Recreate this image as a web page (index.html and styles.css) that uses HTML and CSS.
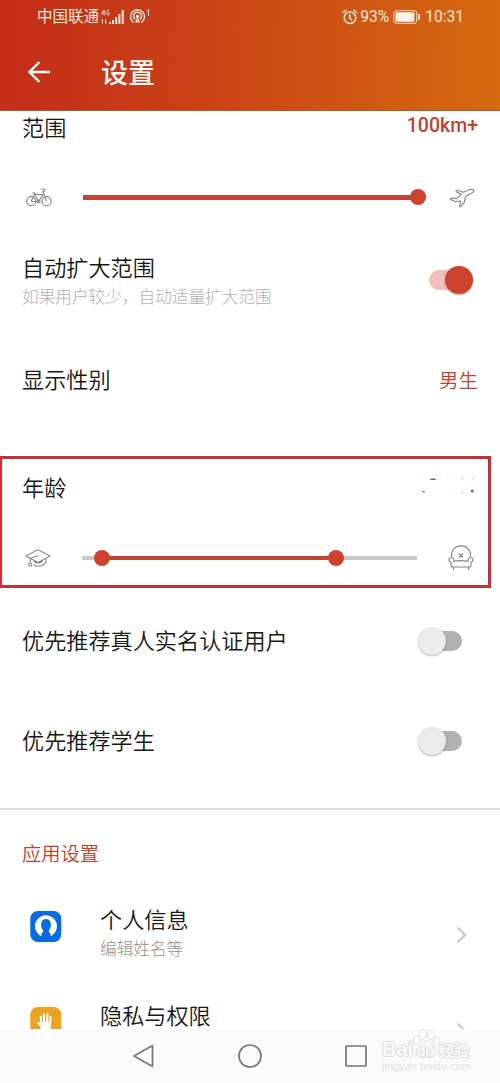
FILE: index.html
```html
<!DOCTYPE html>
<html lang="zh-CN">
<head>
<meta charset="utf-8">
<title>设置</title>
<link rel="stylesheet" href="styles.css">
</head>
<body>
<div class="phone">
  <header class="header">
    <div class="status">
      <span class="carrier">中国联通</span>
      <svg class="signal" width="24" height="18" viewBox="0 0 24 18">
        <g fill="none" stroke="#ffe9dc" stroke-width="1"><path d="M3 2L.6 5.6H4M3.2 2v5.500M8.300 3C7.500 1.800 5.700 2 5.700 4.700C5.700 7.600 8.300 7.600 8.300 5H7M1.500 11.500v4M.5 12.700l1-1.200M4.500 11.500v4M5.500 14.300l-1 1.200"/></g>
        <path fill="#ffe9dc" d="M8 14h2v2H8zM11 12h2v4h-2zM14.200 9h2v7h-2zM17.400 6h2v10h-2zM20.700 2h2v14h-2z"/>
      </svg>
      <svg class="hotspot" width="22" height="18" viewBox="0 0 22 18">
        <g fill="none" stroke="#ffe9dc" stroke-width="1.500" stroke-linecap="round"><path d="M4.200 14.200A7 7 0 1 1 12.800 14.200M5.700 11A4 4 0 1 1 11.300 11"/></g>
        <circle cx="8.500" cy="8.500" r="1.700" fill="#ffe9dc"/><path d="M8.500 9l2.500 5.500H6z" fill="#ffe9dc"/>
        <path d="M17.700 2.800l1.800-1v6" fill="none" stroke="#ffe9dc"/>
      </svg>
      <svg class="alarm" width="16" height="16" viewBox="0 0 16 16" fill="none" stroke="#ffe9dc" stroke-width="1.500" stroke-linecap="round"><circle cx="8" cy="8.700" r="5.800"/><path d="M7.700 5.500v3.500l2 1.700M1.300 3.500L4 1.200M12 1.200l2.700 2.300"/></svg>
      <span class="pct">93%</span>
      <svg class="battery" width="28" height="14" viewBox="0 0 28 14"><rect x=".7" y=".7" width="23" height="12.600" rx="2.500" fill="none" stroke="#ffd9bd" stroke-width="1"/><rect x="2.400" y="2.300" width="19" height="9.400" rx="1" fill="#fff1e8"/><path d="M26 4v6" stroke="#ffe9dc" stroke-width="1.700"/></svg>
      <span class="clock">10:31</span>
    </div>
    <div class="toolbar">
      <svg width="24" height="24" viewBox="0 0 24 24" fill="none" stroke="#fff" stroke-width="2.400"><path d="M23 12H3M12.500 2L2.400 12l10.100 10"/></svg>
      <h1 class="title">设置</h1>
    </div>
  </header>

  <main class="content">
    <div class="row range-head"><span class="label">范围</span><span class="value distance">100km+</span></div>
    <div class="slider range-slider">
      <svg class="edge-icon" width="26" height="26" viewBox="0 0 26 26" fill="none" stroke="#8a8a8a" stroke-width="1.200"><circle cx="5.200" cy="17.200" r="4.500"/><circle cx="20.600" cy="17.200" r="4.500"/><path d="M5.200 17.200L8.500 10.500H17l-4.500 7H5.200M6.200 9h4M8 9l4.500 8.500M15 5h3.500l.5 1.800-2.300.7 3.900 9.700"/><circle cx="12.500" cy="17.500" r="1.500"/></svg>
      <div class="track full"><i class="fill"></i><i class="knob"></i></div>
      <svg class="edge-icon" width="26" height="26" viewBox="0 0 26 26" fill="none" stroke="#8a8a8a" stroke-width="1.200" stroke-linejoin="round"><path d="M14.400 8.300L8.600 6.300 7 7.800l5.300 2.600-4.700 4.200-4.600-.7-1.700 1.200 5.100 2.600 5.300-.7-1.200 6 1.500-.8 3.200-3.700 1.500-6.200 6.500-3.500c2.200-1.200 2.200-2.800.2-3.400-1.800-.4-3 .1-4.600 1.100z"/></svg>
    </div>
    <div class="row auto-row">
      <div class="texts"><span class="label">自动扩大范围</span><span class="hint">如果用户较少，自动适量扩大范围</span></div>
      <span class="switch on"></span>
    </div>
    <div class="row gender-row"><span class="label">显示性别</span><span class="value gender">男生</span></div>

    <section class="age-box">
      <div class="row age-head">
        <span class="label">年龄</span>
        <svg class="age-value" width="56" height="18" viewBox="0 0 56 18"><g fill="#a93a32"><path d="M8 3.600Q11 1.400 14 3.400V4H8zM.5 15h2.200v1.200H.5zM49 14.300l1.500-.8 1 .8v2H49z"/><path d="M39.500 2h1.500v.7h-1.500zM50 2h1v.7h-1zM39.500 16h1.500v.7h-1.500z" opacity=".6"/></g></svg>
      </div>
      <div class="slider age-slider">
        <svg class="edge-icon" width="26" height="26" viewBox="0 0 26 26" fill="none" stroke="#8a8a8a" stroke-width="1.100" stroke-linejoin="round"><path d="M.9 11L13 4.700 25.100 11 13 17.400 5.200 13.300 13 10.700M.9 11l4.300 2.300v5M21 14v2.500c-1.800 4.700-9 6-12.500 3.300M8.700 16.200c2 1.600 5.800 2.500 9.300-.2"/><circle cx="5.200" cy="19.600" r="1.600"/></svg>
        <div class="track span"><i class="fill"></i><i class="knob low"></i><i class="knob high"></i></div>
        <svg class="edge-icon" width="26" height="26" viewBox="0 0 26 26" fill="none" stroke="#868686" stroke-width="1.100"><path d="M3.800 12.500C2.500 5.500 7 .9 13 .9s10.500 4.600 9.200 11.600M5.500 16.500c5-1.200 10-1.200 15 0M6 16.500c0-2.500-1-4-2.700-4C.3 12.500.3 17 3 17.200V20c0 1.300.8 2 2 2h16c1.200 0 2-.7 2-2v-2.800c2.700-.2 2.700-4.700-.3-4.700-1.700 0-2.700 1.500-2.700 4M5.500 22v3M20.500 22v3M11 8.500l4 4M15 8.500l-4 4"/></svg>
      </div>
    </section>

    <div class="row toggle-row"><span class="label">优先推荐真人实名认证用户</span><span class="switch"></span></div>
    <div class="row toggle-row"><span class="label">优先推荐学生</span><span class="switch"></span></div>

    <section class="app-settings">
      <h2 class="section-title">应用设置</h2>
      <div class="item">
        <svg class="app-icon" width="32" height="31" viewBox="0 0 32 31"><rect x=".3" width="31" height="31" rx="7.500" fill="#096be0"/><path fill="#fff" d="M11.500 25.200A11 10.900 0 1 1 20.500 25.200V22.400C18.800 21.500 18.500 20.200 19 19c3-3 2.700-11-3-11s-6 8-3 11c.5 1.200.2 2.500-1.500 3.400z"/></svg>
        <div class="texts"><span class="label">个人信息</span><span class="hint dark">编辑姓名等</span></div>
        <svg class="chevron" width="12" height="18" viewBox="0 0 12 18" fill="none" stroke="#c8c8c8" stroke-width="2.400"><path d="M1.500 1.500L9 9l-7.500 7.500"/></svg>
      </div>
      <div class="item">
        <svg class="app-icon" width="32" height="31" viewBox="0 0 32 31"><rect x=".3" width="31" height="31" rx="7.500" fill="#eda321"/><g fill="none" stroke="#fff" stroke-width="2.100" stroke-linecap="round"><path d="M11.200 16L10.800 9.800M14.100 16L13.800 7.200M17.200 16L17.500 7.200M20 17L20.700 10M8.500 15.800l3.500 4.500"/></g><path fill="#fff" d="M10.200 15h10.800v4c0 3-2 4-2 8h-6c0-3-2.800-4-2.800-8z"/></svg>
        <div class="texts"><span class="label">隐私与权限</span></div>
        <svg class="chevron" width="12" height="18" viewBox="0 0 12 18" fill="none" stroke="#c8c8c8" stroke-width="2.400"><path d="M1.500 1.500L9 9l-7.500 7.500"/></svg>
      </div>
    </section>
  </main>

  <nav class="navbar">
    <svg width="24" height="26" viewBox="0 0 24 26" fill="none" stroke="#777" stroke-width="1.700" stroke-linejoin="round"><path d="M20.500 2.500v21L2 13z"/></svg>
    <svg width="26" height="26" viewBox="0 0 26 26" fill="none" stroke="#777" stroke-width="1.700"><circle cx="13" cy="13" r="11"/></svg>
    <svg width="24" height="24" viewBox="0 0 24 24" fill="none" stroke="#777" stroke-width="1.700"><rect x="2" y="2" width="20" height="20" rx="1"/></svg>
  </nav>

  <div class="watermark">
    <svg class="paw" width="30" height="30" viewBox="0 0 30 30" fill="#fff" stroke="#dedede" stroke-width="1"><ellipse cx="5" cy="11" rx="3.300" ry="4.500"/><ellipse cx="10.800" cy="5.500" rx="3.300" ry="4.500"/><ellipse cx="19" cy="5.700" rx="3.300" ry="4.500"/><ellipse cx="24.500" cy="12.500" rx="3.300" ry="4.200"/><path d="M14.500 12c4 0 5 5 8.500 8 4 4 1 8.500-3 8.500H8.500C4 28.500 2 24 5.500 20c3-3 5-8 9-8z"/></svg>
    <div class="brand"><span class="bai">Bai</span><span class="du">du</span><span class="jy">经验</span></div>
    <div class="site">jingyan.baidu.com</div>
  </div>
</div>
</body>
</html>
```
FILE: styles.css
```css
* { box-sizing: border-box; }
body { margin: 0; background: #fff; font-family: Roboto, "Noto Sans CJK SC", sans-serif; }
svg { display: block; flex: none; }
i { display: block; }
.phone { position: relative; width: 500px; height: 1083px; display: flex; flex-direction: column; overflow: hidden; }

.header { height: 111px; flex: none; background: linear-gradient(92deg, #c32d19 0%, #cb4216 42%, #d56a10 100%); border-bottom: 1px solid #a95a2b; color: #ffe9dc; }
.status { height: 34px; display: flex; align-items: center; padding: 0 36px 0 37px; font-size: 15.6px; }
.carrier { font-size: 15.5px; line-height: 20px; padding-bottom: 1px; white-space: nowrap; }
.signal { margin-left: 2px; }
.hotspot { margin-left: 4px; }
.alarm { margin-left: auto; }
.pct { margin-left: 2px; }
.battery { margin-left: 4px; }
.clock { margin-left: 4px; }
.toolbar { height: 76px; display: flex; align-items: center; padding-left: 27px; }
.title { margin: 0 0 0 50px; padding-top: 4px; color: #fff; font-size: 27px; font-weight: 500; line-height: 40px; }

.content { flex: 1; min-height: 0; overflow: hidden; }
.row { display: flex; align-items: center; justify-content: space-between; padding: 0 22px; }
.label { color: #161616; font-size: 22.15px; line-height: 30px; font-weight: 350; white-space: nowrap; }
.value { color: #c3402f; font-size: 19.5px; line-height: 28px; font-weight: 350; }
.gender { padding-top: 3px; }
.distance { font-weight: 500; padding-bottom: 5px; }
.texts { display: flex; flex-direction: column; }
.hint { padding-top: 1px; color: #b0b0b0; font-size: 16.65px; line-height: 28px; font-weight: 300; white-space: nowrap; }
.hint.dark { color: #929292; }
.range-head { height: 34px; }
.auto-row { height: 82px; align-items: flex-start; padding-top: 4px; }
.gender-row { height: 98px; }
.toggle-row { height: 100px; }

.slider { display: grid; grid-template-columns: 26px 335px 26px; column-gap: 31px; align-items: center; }
.range-slider { height: 104px; padding-left: 26px; }
.track { position: relative; height: 4px; background: #c9c9c9; }
.fill { height: 100%; background: #c24532; }
.knob { position: absolute; top: 50%; width: 16px; height: 16px; margin: -8px 0 0 -8px; border-radius: 50%; background: #cd422d; }
.full { height: 5px; }
.full .knob { left: 100%; }
.span .fill { margin-left: 20px; width: 234px; }
.low { left: 20px; }
.high { left: 254px; }

.age-box { width: 491px; height: 132px; margin: 27px 0 3px; border: 3px solid #bf3238; border-left: 2px solid #e02730; }
.age-head { height: 58px; padding: 0 10px 0 20px; }
.age-value { margin-bottom: 6px; }
.age-slider { height: 54px; margin-top: 14px; padding-left: 23px; }

.switch { position: relative; width: 45px; height: 28px; margin-right: 16px; flex: none; }
.switch::before { content: ""; position: absolute; inset: 4px 0 4px 6px; border-radius: 10px; background: #b1b1b1; }
.switch::after { content: ""; position: absolute; left: 1px; top: 0; width: 28px; height: 28px; border-radius: 50%; background: #ebebeb; box-shadow: 0 1px 2px rgba(0,0,0,.3); }
.switch.on { margin: 13px 5px 0 0; }
.switch.on::before { inset: 4px 6px 4px 1px; background: #f1c0ba; }
.switch.on::after { left: auto; right: 0; background: #cd432e; }

.app-settings { margin-top: 17px; border-top: 2px solid #e1e1e1; }
.section-title { margin: 0; padding: 31px 22px 0; height: 95px; color: #c3402f; font-size: 19.3px; line-height: 28px; font-weight: 350; }
.item { height: 96px; display: flex; align-items: flex-start; padding: 0 32px 0 30px; }
.app-icon { margin-top: 6px; }
.item .texts { margin-left: 38px; }
.chevron { margin: 21px 0 0 auto; }

.navbar { height: 54px; flex: none; background: #fafafa; display: flex; align-items: center; justify-content: center; gap: 81px; }
.watermark { position: absolute; left: 382px; top: 1029px; width: 92px; height: 45px; color: #fafafa; text-shadow: -1px 0 #ddd, 1px 0 #ddd, 0 -1px #ddd, 0 1px #ddd; }
.paw { position: absolute; left: 30px; top: 0; }
.brand { position: relative; display: flex; align-items: center; height: 40px; font-family: "Liberation Sans", "Noto Sans CJK SC", sans-serif; font-weight: 700; }
.bai { width: 35px; font-size: 20px; }
.du { width: 22px; font-size: 14px; padding-top: 3px; }
.jy { font-size: 15px; white-space: nowrap; }
.site { margin-top: -9px; color: #e2e2e2; font-size: 11px; line-height: 12px; text-shadow: none; font-family: "Liberation Sans", sans-serif; }
```
